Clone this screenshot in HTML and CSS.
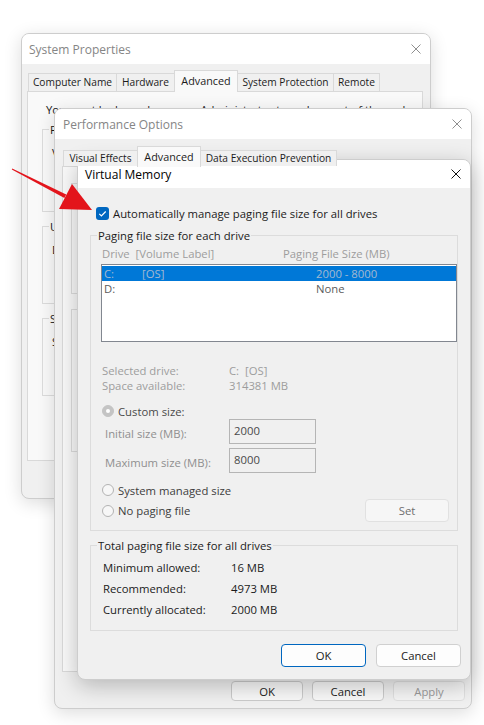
FILE: index.html
```html
<!DOCTYPE html>
<html lang="en">
<head>
<meta charset="utf-8">
<title>Virtual Memory</title>
<link rel="stylesheet" href="styles.css">
</head>
<body>
<div class="desktop">

  <section class="win win-sys">
    <header class="titlebar inactive">
      <span class="title">System Properties</span>
      <svg class="close" viewBox="0 0 10 10"><path d="M0.5 0.5L9.5 9.5M9.5 0.5L0.5 9.5"/></svg>
    </header>
    <div class="tabs sys-tabs">
      <span class="tab tw-cn">Computer Name</span>
      <span class="tab tw-hw">Hardware</span>
      <span class="tab sel tw-adv">Advanced</span>
      <span class="tab tw-sp">System Protection</span>
      <span class="tab tw-rm">Remote</span>
    </div>
    <div class="panel sys-panel">
      <p class="note">You must be logged on as an Administrator to make most of these changes.</p>
      <fieldset class="grp sg sg1"><legend>Performance</legend><p>Visual effects, processor scheduling, memory usage, and virtual memory</p></fieldset>
      <fieldset class="grp sg sg2"><legend>User Profiles</legend><p>Desktop settings related to your sign-in</p></fieldset>
      <fieldset class="grp sg sg2"><legend>Startup and Recovery</legend><p>System startup, system failure, and debugging information</p></fieldset>
    </div>
  </section>

  <section class="win win-perf">
    <header class="titlebar inactive">
      <span class="title">Performance Options</span>
      <svg class="close" viewBox="0 0 10 10"><path d="M0.5 0.5L9.5 9.5M9.5 0.5L0.5 9.5"/></svg>
    </header>
    <div class="tabs perf-tabs">
      <span class="tab tw-ve">Visual Effects</span>
      <span class="tab sel tw-padv">Advanced</span>
      <span class="tab tw-dep">Data Execution Prevention</span>
    </div>
    <div class="panel perf-panel">
      <fieldset class="grp pg pg1"><legend>Processor scheduling</legend><p>Choose how to allocate processor resources.</p></fieldset>
      <fieldset class="grp pg pg2"><legend>Virtual memory</legend><p>A paging file is an area on the hard disk.</p></fieldset>
    </div>
    <div class="btnrow perf-btns">
      <button class="btn pbtn">OK</button>
      <button class="btn pbtn">Cancel</button>
      <button class="btn pbtn disabled">Apply</button>
    </div>
  </section>

  <section class="win win-vm">
    <header class="titlebar">
      <span class="title">Virtual Memory</span>
      <svg class="close" viewBox="0 0 10 10"><path d="M0.5 0.5L9.5 9.5M9.5 0.5L0.5 9.5"/></svg>
    </header>
    <div class="vm-body">
      <div class="check-row">
        <span class="checkbox"><svg viewBox="0 0 13 13"><path d="M3.3 6.9L5.4 8.9L9.7 4.5"/></svg></span>
        <span>Automatically manage paging file size for all drives</span>
      </div>

      <fieldset class="grp vm-grp1">
        <legend>Paging file size for each drive</legend>
        <div class="cols dis"><span class="c1">Drive&nbsp; [Volume Label]</span><span>Paging File Size (MB)</span></div>
        <div class="listbox">
          <div class="lrow sel"><span class="ld">C:</span><span class="ll">[OS]</span><span>2000 - 8000</span></div>
          <div class="lrow"><span class="ld">D:</span><span class="ll"></span><span>None</span></div>
        </div>
        <div class="info dis first"><span class="ik">Selected drive:</span><span>C:&nbsp; [OS]</span></div>
        <div class="info dis"><span class="ik">Space available:</span><span>314381 MB</span></div>
        <div class="radio-row r-custom"><span class="radio on"></span><span>Custom size:</span></div>
        <div class="size-row"><span class="sk">Initial size (MB):</span><span class="field">2000</span></div>
        <div class="size-row second"><span class="sk">Maximum size (MB):</span><span class="field">8000</span></div>
        <div class="radio-row r-sys"><span class="radio"></span><span>System managed size</span></div>
        <div class="radio-row r-none"><span class="radio"></span><span>No paging file</span><button class="btn set">Set</button></div>
      </fieldset>

      <fieldset class="grp vm-grp2">
        <legend>Total paging file size for all drives</legend>
        <div class="tot first"><span class="tk">Minimum allowed:</span><span>16 MB</span></div>
        <div class="tot"><span class="tk">Recommended:</span><span>4973 MB</span></div>
        <div class="tot"><span class="tk">Currently allocated:</span><span>2000 MB</span></div>
      </fieldset>

      <div class="btnrow vm-btns">
        <button class="btn vbtn default">OK</button>
        <button class="btn vbtn">Cancel</button>
      </div>
    </div>
  </section>

  <svg class="arrow" viewBox="0 0 100 70">
    <path d="M12.2 18.5L66.2 44.5L64.4 48.1L11.8 19.5Z"/>
    <path d="M92 60L59 59L72 34Z"/>
  </svg>
</div>
</body>
</html>
```

FILE: styles.css
```css
* { box-sizing: border-box; }
html, body { margin: 0; padding: 0; }
body {
  width: 484px; height: 725px; overflow: hidden;
  background: #ffffff;
  font-family: "Open Sans", "Noto Sans", sans-serif;
  font-size: 11.3px; line-height: 15px; color: #1b1b1b;
}
p { margin: 0; }
.desktop { position: relative; width: 484px; height: 725px; }

/* windows */
.win {
  position: absolute; display: flex; flex-direction: column;
  background: #f0f0f0; border: 1px solid #cdcdcd; border-radius: 8px;
  overflow: hidden; box-shadow: 0 4px 18px rgba(0,0,0,.14);
}
.win-sys { left: 21px; top: 33px; width: 410px; height: 466px; }
.win-perf { left: 54px; top: 108px; width: 418px; height: 601px; }
.win-vm { left: 77px; top: 159px; width: 394px; height: 521px; box-shadow: 0 6px 22px rgba(0,0,0,.24); }

.titlebar {
  flex: none; display: flex; align-items: center; justify-content: space-between;
  height: 30px; padding: 0 9px 0 7px; background: #ffffff;
  font-size: 12px; color: #000;
}
.win-perf .titlebar { padding-left: 8px; }
.win-vm .titlebar { height: 28px; }
.titlebar.inactive { color: #858585; }
.close { width: 10px; height: 10px; fill: none; stroke: #111; stroke-width: 1; }
.inactive .close { stroke: #8f8f8f; }

/* tabs */
.tabs { flex: none; display: flex; align-items: flex-end; height: 27px; position: relative; z-index: 1; white-space: nowrap; font-size: 10.2px; }
.sys-tabs { padding-left: 6px; }
.perf-tabs { padding-left: 8px; }
.tab {
  display: flex; align-items: center; justify-content: center;
  height: 18px; border: 1px solid #d9d9d9; border-bottom: none; margin-right: -1px;
  background: #f0f0f0; color: #1b1b1b;
}
.perf-tabs .tab { height: 16px; }
.tab.sel { height: 22px; margin-bottom: -1px; padding-bottom: 3px; background: #f9f9f9; font-size: 10.8px; }
.perf-tabs .tab.sel { height: 21px; padding-bottom: 2px; }
.tw-cn { width: 89px; } .tw-hw { width: 59px; } .tw-adv { width: 64px; }
.tw-sp { width: 97px; } .tw-rm { width: 47px; }
.tw-ve { width: 75px; } .tw-padv { width: 64px; } .tw-dep { width: 137px; }

.panel { flex: none; background: #f9f9f9; border: 1px solid #d9d9d9; overflow: hidden; white-space: nowrap; }
.sys-panel { margin-left: 5px; width: 396px; height: 370px; padding: 10px 14px 0; }
.perf-panel { margin-left: 7px; width: 402px; height: 506px; padding: 9px 7px 0; }
.note { margin-left: 4px; }

/* group boxes */
.grp { margin: 0; padding: 0; border: 1px solid #dcdcdc; min-width: 0; }
.grp legend { margin-left: 6px; padding: 0 1px; line-height: 15px; }
.sg p, .pg p { margin: 8px 0 0 9px; }
.sg1 { margin-top: 5px; height: 90px; }
.sg2 { margin-top: 6.5px; height: 85.5px; }
.pg1 { margin-left: 1px; height: 118px; }
.pg2 { margin: 8px 0 0 1px; height: 150px; }

/* buttons */
.btn {
  font: inherit; line-height: 15px; color: #1b1b1b; padding: 0;
  background: #fdfdfd; border: 1px solid #d0d0d0; border-radius: 4px;
  display: flex; align-items: center; justify-content: center;
}
.btnrow { flex: none; display: flex; justify-content: flex-end; }
.perf-btns { margin-top: 9px; padding-right: 6px; gap: 9px; }
.pbtn { width: 72px; height: 20px; background: #f9f9f9; border-color: #cbcbcb; }
.pbtn.disabled { color: #9a9a9a; background: #f5f5f5; border-color: #e0e0e0; }

/* virtual memory dialog */
.vm-body { flex: 1; display: flex; flex-direction: column; padding: 0 12px; }
.check-row { display: flex; align-items: center; gap: 4px; height: 16px; margin: 17px 0 0 6px; white-space: nowrap; }
.checkbox { width: 13px; height: 13px; border-radius: 3px; background: #0067c0; display: flex; flex: none; }
.checkbox svg { width: 13px; height: 13px; fill: none; stroke: #fff; stroke-width: 1.2; }

.vm-grp1 { margin-top: 6.5px; padding-bottom: 8px; }
.vm-grp2 { margin-top: 6.5px; padding-bottom: 10px; }
.dis { color: #9d9d9d; }
.cols { display: flex; margin: 3px 0 0 11px; white-space: nowrap; }
.c1 { width: 181px; }
.listbox { margin: 3.5px 0 0 10px; height: 78px; background: #fff; border: 1px solid #828790; padding-top: 1px; }
.lrow { display: flex; height: 15px; padding-left: 2px; color: #5c5c5c; white-space: nowrap; }
.lrow.sel { background: #0078d7; color: #a4b8d0; }
.ld { width: 38px; }
.ll { width: 174px; }
.info { display: flex; margin-left: 11px; white-space: nowrap; }
.info.first { margin-top: 20.5px; }
.ik { width: 127px; }
.radio-row { display: flex; align-items: center; gap: 4px; margin-left: 11px; color: #3d3d3d; white-space: nowrap; }
.radio { width: 12px; height: 12px; border-radius: 50%; border: 1px solid #b3b3b3; background: #f7f7f7; flex: none; display: flex; align-items: center; justify-content: center; }
.radio.on { background: #c4c4c4; border-color: #c4c4c4; }
.radio.on::after { content: ""; width: 4px; height: 4px; border-radius: 50%; background: #fff; }
.r-custom { margin-top: 11px; color: #4a4a4a; }
.r-sys { margin-top: 9.5px; }
.r-none { margin-top: 1.5px; }
.set { margin-left: auto; margin-right: 8px; width: 84px; height: 23px; background: #f6f6f6; border-color: #e1e1e1; color: #6e6e6e; }
.size-row { display: flex; align-items: center; margin-left: 14px; color: #8f8f8f; white-space: nowrap; }
.size-row.second { margin-top: 4.5px; }
.sk { width: 124px; padding-top: 4px; }
.field { width: 87px; height: 25px; border: 1px solid #b5b5b5; padding: 3px 0 0 4px; color: #4a4a4a; align-self: flex-start; }
.tot { display: flex; margin-left: 12px; line-height: 21px; white-space: nowrap; }
.tot.first { margin-top: 4px; }
.tk { width: 128px; }
.vm-btns { margin: 13.5px -3px 0 0; gap: 10px; }
.vbtn { width: 85px; height: 23px; }
.vbtn.default { border-color: #0067c0; }

/* annotation arrow */
.arrow { position: absolute; left: 0; top: 150px; width: 100px; height: 70px; z-index: 5; }
.arrow path { fill: #e3141b; }
```
